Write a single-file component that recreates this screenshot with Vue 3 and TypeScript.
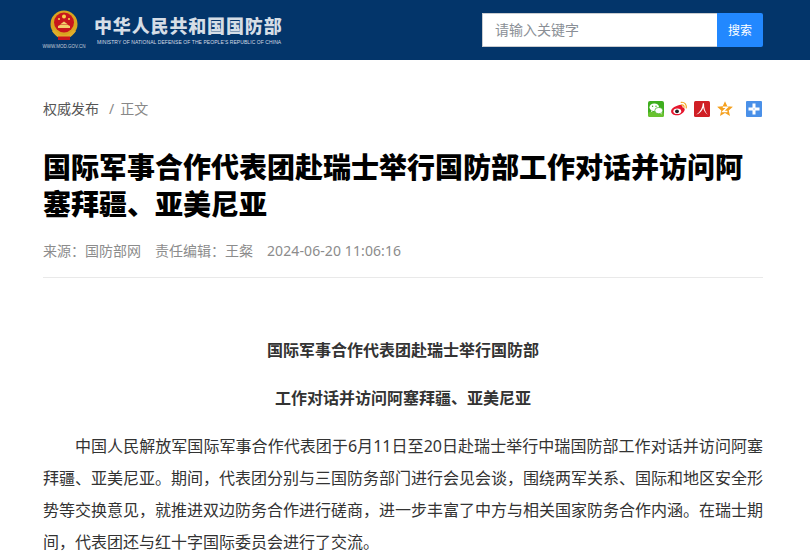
<script setup lang="ts">
const paragraphLines = '中国人民解放军国际军事合作代表团于6月11日至20日赴瑞士举行中瑞国防部工作对话并访问阿塞拜疆、亚美尼亚。期间，代表团分别与三国防务部门进行会见会谈，围绕两军关系、国际和地区安全形势等交换意见，就推进双边防务合作进行磋商，进一步丰富了中方与相关国家防务合作内涵。在瑞士期间，代表团还与红十字国际委员会进行了交流。';
</script>

<template>
  <div class="page">
    <header class="top">
      <div class="top__inner">
        <div class="brand">
          <div class="brand__emblem">
            <svg width="28" height="31" viewBox="0 0 28 31">
              <circle cx="14" cy="14" r="13.500" fill="#d9a520" />
              <circle cx="14" cy="12.500" r="10" fill="#c8161d" />
              <circle cx="14" cy="6.500" r="2" fill="#f7d24a" />
              <circle cx="9" cy="9" r="1.100" fill="#f7d24a" />
              <circle cx="19" cy="9" r="1.100" fill="#f7d24a" />
              <path d="M8 18h12v-2l-2-1h-8l-2 1zM10 14.500l4-3 4 3z" fill="#f3cf6b" />
              <path d="M2 21c3 5 8 8 12 8s9-3 12-8l-3-1c-2 3-6 5-9 5s-7-2-9-5z" fill="#e0ad2a" />
              <rect x="8" y="26.500" width="12" height="3.500" fill="#c8161d" />
            </svg>
            <span class="brand__url">WWW.MOD.GOV.CN</span>
          </div>
          <div class="brand__name">
            <span class="brand__cn">中华人民共和国国防部</span>
            <span class="brand__en">MINISTRY OF NATIONAL DEFENSE OF THE PEOPLE'S REPUBLIC OF CHINA</span>
          </div>
        </div>
        <form class="search" @submit.prevent>
          <input class="search__input" type="text" placeholder="请输入关键字" />
          <button class="search__btn" type="submit">搜索</button>
        </form>
      </div>
    </header>

    <main class="article">
      <div class="crumbs">
        <div class="crumbs__path">
          <span class="crumbs__link">权威发布</span>
          <span class="crumbs__sep">/</span>
          <span class="crumbs__here">正文</span>
        </div>
        <div class="share">
          <svg class="share__icon" viewBox="0 0 16 16">
            <rect width="16" height="16" rx="2" fill="#3fae1f" />
            <rect y="11" width="16" height="5" rx="2" fill="#69c22f" />
            <ellipse cx="6.300" cy="6.300" rx="4.800" ry="3.900" fill="#fff" />
            <path d="M3.500 9.200l-.8 2 2.300-1.200z" fill="#fff" />
            <ellipse cx="10.800" cy="9.600" rx="4" ry="3.200" fill="#fff" stroke="#3fae1f" stroke-width=".7" />
            <path d="M12.500 12.300l1 1.500-.1-2z" fill="#fff" />
            <circle cx="4.600" cy="5.300" r=".7" fill="#3fae1f" />
            <circle cx="8" cy="5.300" r=".7" fill="#3fae1f" />
          </svg>
          <svg class="share__icon" viewBox="0 0 16 16">
            <path d="M6.800 4.600c2.900-1.500 5.200-1 4.600 1.700 2 .5 2.700 1.700 2.200 3-.9 3-4.600 5.100-7.800 5C2.800 14.200 0 12.900.1 10 .2 8 3.500 5.500 6.800 4.600z" fill="#e6162d" />
            <ellipse cx="6.300" cy="10.200" rx="3.900" ry="2.800" fill="#fff" />
            <circle cx="6" cy="10.300" r="1.900" fill="#222" />
            <path d="M10.300 1.300c3-.4 5.500 2.100 4.900 5.600M10.600 3.800c1.500-.2 2.700 1 2.400 2.600" fill="none" stroke="#f5a623" stroke-width="1.200" stroke-linecap="round" />
          </svg>
          <svg class="share__icon" viewBox="0 0 16 16">
            <rect width="16" height="16" rx="1.500" fill="#d01f25" />
            <path d="M8.800 2.200c-.3 4.500-2.200 8.300-6.600 11.500 3.900-1.500 6.200-3.800 7-7.200.6 3 1.800 5.400 4.600 7.200-2.600-2.500-3.900-6.700-3.800-11.500z" fill="#fff" />
          </svg>
          <svg class="share__icon" viewBox="0 0 16 16">
            <path d="M8 .2l2.300 5 5.600.6-4.200 3.600 1.300 5.600L8 12.100l-5 2.900 1.300-5.600L.1 5.800l5.600-.6z" fill="#f5a01e" />
            <path d="M5.800 6.300h4.400L6 10.500h4.400" fill="none" stroke="#fff" stroke-width="1.500" />
          </svg>
          <svg class="share__icon share__icon--plus" viewBox="0 0 16 16">
            <rect width="16" height="16" rx="1" fill="#4a90e8" />
            <path d="M6.500 2.500h3v4h4v3h-4v4h-3v-4h-4v-3h4z" fill="#fff" />
            <rect x="7.500" y="7.500" width="1" height="1" fill="#4a90e8" />
          </svg>
        </div>
      </div>

      <h1 class="article__title">国际军事合作代表团赴瑞士举行国防部工作对话并访问阿塞拜疆、亚美尼亚</h1>

      <div class="meta">
        <span>来源：国防部网</span>
        <span>责任编辑：王粲</span>
        <span class="meta__date">2024-06-20 11:06:16</span>
      </div>

      <section class="body">
        <p class="body__head">国际军事合作代表团赴瑞士举行国防部</p>
        <p class="body__head">工作对话并访问阿塞拜疆、亚美尼亚</p>
        <p class="body__text">{{ paragraphLines }}</p>
      </section>
    </main>
  </div>
</template>

<style>
html,
body {
  margin: 0;
  background: #fff;
  overflow: hidden;
}
</style>

<style scoped>
.page {
  font-family: "Noto Sans", "Noto Sans CJK SC", sans-serif;
  color: #333;
  height: 557px;
  overflow: hidden;
}
.top {
  background: #03356a;
  height: 60px;
}
.top__inner {
  width: 720px;
  height: 60px;
  margin-left: 43px;
  display: flex;
  align-items: center;
  justify-content: space-between;
}
.brand {
  display: flex;
  align-items: flex-start;
  gap: 9px;
  height: 42px;
  margin-top: 2px;
}
.brand__emblem {
  width: 42px;
  display: flex;
  flex-direction: column;
  align-items: center;
  gap: 2px;
}
.brand__url {
  font-family: "Liberation Sans", sans-serif;
  font-size: 4.500px;
  line-height: 7px;
  color: #c4ced9;
  white-space: nowrap;
}
.brand__name {
  display: flex;
  flex-direction: column;
  padding-top: 5px;
}
.brand__cn {
  font-size: 18px;
  line-height: 23px;
  font-weight: 900;
  letter-spacing: 0.850px;
  color: #d5dde6;
  white-space: nowrap;
}
.brand__en {
  font-family: "Liberation Sans", sans-serif;
  font-size: 5px;
  line-height: 9px;
  margin-left: 3px;
  letter-spacing: 0.070px;
  color: #d5dde6;
  white-space: nowrap;
}
.search {
  display: flex;
  width: 281px;
  height: 34px;
  margin: -1px 0 0;
}
.search__input {
  flex: 1;
  min-width: 0;
  box-sizing: border-box;
  border: 1px solid #c9ccd0;
  border-right: 0;
  background: #fff;
  padding: 0 12px;
  font-family: inherit;
  font-size: 14px;
  outline: none;
}
.search__input::placeholder {
  color: #8a8f96;
}
.search__btn {
  width: 46px;
  border: 0;
  border-radius: 0 2px 2px 0;
  background: #2288ff;
  color: #fff;
  font-family: inherit;
  font-size: 12px;
  padding: 0;
}
.article {
  width: 720px;
  margin-left: 43px;
}
.crumbs {
  display: flex;
  justify-content: space-between;
  align-items: center;
  padding-top: 39px;
  height: 20px;
  box-sizing: content-box;
}
.crumbs__path {
  display: flex;
  align-items: center;
  font-size: 14px;
  line-height: 20px;
}
.crumbs__link {
  color: #555;
}
.crumbs__sep {
  color: #888;
  margin: 0 6px 0 10px;
}
.crumbs__here {
  color: #888;
}
.share {
  display: flex;
  align-items: center;
  gap: 7px;
  margin-right: 1px;
}
.share__icon {
  width: 16px;
  height: 16px;
}
.share__icon--plus {
  margin-left: 6px;
}
.article__title {
  margin: 30px 0 0;
  font-size: 28px;
  line-height: 37px;
  font-weight: 900;
  color: #000;
}
.meta {
  display: flex;
  gap: 14px;
  margin-top: 18px;
  font-size: 14px;
  line-height: 20px;
  color: #8c8c8c;
  padding-bottom: 16px;
  border-bottom: 1px solid #e9e9e9;
}
.meta__date {
  letter-spacing: 0.100px;
}
.body {
  padding-top: 56px;
  font-size: 16px;
  line-height: 32px;
  color: #333;
}
.body p {
  margin: 0 0 16px;
  text-align: justify;
}
.body__head.body__head {
  text-align: center;
  font-weight: 700;
}
.body__text {
  text-indent: 2em;
}
</style>
